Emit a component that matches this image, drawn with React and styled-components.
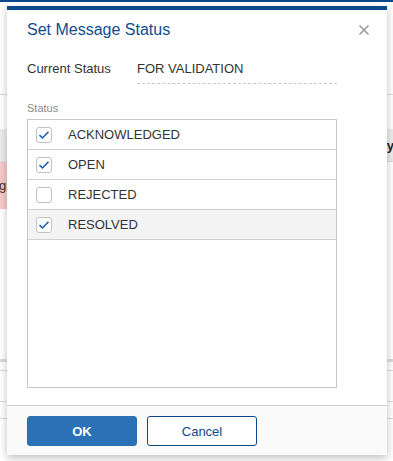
import React, { useState } from 'react';
import styled, { createGlobalStyle } from 'styled-components';

const GlobalStyle = createGlobalStyle`
  html, body {
    margin: 0;
    padding: 0;
    background: #ffffff;
    font-family: "Liberation Sans", Arial, sans-serif;
  }
`;

const Page = styled.div`
  position: relative;
  width: 393px;
  height: 461px;
  overflow: hidden;
  background: #ffffff;
`;

const TopBar = styled.div`
  height: 2px;
  background: #0a4a8a;
`;

const BgRow = styled.div`
  height: ${p => p.h}px;
  margin-top: ${p => p.mt || 0}px;
  background: ${p => p.bg || 'transparent'};
  border-bottom: ${p => (p.line ? `${p.line}px solid #dcdcdc` : 'none')};
  display: flex;
  justify-content: space-between;
  align-items: center;
  font-size: 13px;
  color: #333;
`;

const PinkCell = styled.div`
  width: 200px;
  height: 100%;
  background: #f6caca;
  display: flex;
  align-items: center;
`;

const Dialog = styled.div`
  position: absolute;
  top: 6px;
  left: 7px;
  width: 380px;
  height: 449px;
  box-sizing: border-box;
  background: #ffffff;
  border-top: 4px solid #0a4a8a;
  box-shadow: 0 3px 8px rgba(0, 0, 0, 0.25);
  display: flex;
  flex-direction: column;
`;

const Body = styled.div`
  flex: 1;
  padding: 10px 20px 0;
  display: flex;
  flex-direction: column;
`;

const Header = styled.div`
  display: flex;
  justify-content: space-between;
  align-items: center;
  height: 20px;
`;

const Title = styled.h2`
  margin: 0;
  font-size: 16px;
  font-weight: normal;
  color: #0f4c8c;
  line-height: 20px;
`;

const Close = styled.button`
  border: 0;
  background: none;
  padding: 0;
  width: 12px;
  height: 12px;
  margin-right: -3px;
  display: flex;
  cursor: pointer;
`;

const Field = styled.div`
  display: flex;
  align-items: flex-start;
  margin-top: 21px;
  font-size: 13px;
  line-height: 16px;
  color: #333;
`;

const FieldLabel = styled.div`
  width: 110px;
`;

const FieldValue = styled.div`
  width: 200px;
  padding-bottom: 6px;
  border-bottom: 1px dashed #c8c8c8;
`;

const SmallLabel = styled.div`
  margin-top: 17px;
  font-size: 11px;
  line-height: 14px;
  color: #8a8a8a;
`;

const List = styled.div`
  margin-top: 4px;
  width: 310px;
  height: 269px;
  box-sizing: border-box;
  border: 1px solid #c8c8c8;
`;

const Item = styled.label`
  display: flex;
  align-items: center;
  height: 29px;
  border-bottom: 1px solid #d0d0d0;
  padding-left: 8px;
  background: ${p => (p.$hl ? '#f4f4f4' : '#fff')};
  font-size: 13px;
  color: #333;
  cursor: pointer;
`;

const Box = styled.span`
  width: 16px;
  height: 16px;
  box-sizing: border-box;
  border: 1px solid #c2c2c2;
  border-radius: 3px;
  background: #fff;
  margin-right: 16px;
  display: flex;
  align-items: center;
  justify-content: center;
`;

const Footer = styled.div`
  height: 50px;
  box-sizing: border-box;
  border-top: 1px solid #d0d0d0;
  background: #fafafa;
  padding: 10px 20px 0;
  display: flex;
  gap: 10px;
`;

const Button = styled.button`
  width: 110px;
  height: 30px;
  box-sizing: border-box;
  border-radius: 3px;
  font-family: "Liberation Sans", Arial, sans-serif;
  font-size: 13px;
  font-weight: ${p => (p.$primary ? 'bold' : 'normal')};
  color: ${p => (p.$primary ? '#fff' : '#0a4a8a')};
  background: ${p => (p.$primary ? '#2a72b5' : '#fff')};
  border: 1px solid ${p => (p.$primary ? '#2a72b5' : '#0a4a8a')};
  cursor: pointer;
`;

const Edge = styled.span`
  font-size: 13px;
  color: ${p => p.c || '#333'};
  font-weight: ${p => p.w || 'normal'};
  margin: ${p => p.m};
`;

const Check = () => (
  <svg width="12" height="10" viewBox="0 0 12 10">
    <path d="M1.5 5.2 L4.5 8 L10.5 1.8" fill="none" stroke="#1b5ea6" strokeWidth="1.6" />
  </svg>
);

const statuses = [
  { name: 'ACKNOWLEDGED', on: true },
  { name: 'OPEN', on: true },
  { name: 'REJECTED', on: false },
  { name: 'RESOLVED', on: true, hl: true },
];

export default function App() {
  const [items, setItems] = useState(statuses);

  const toggle = i =>
    setItems(items.map((s, j) => (j === i ? { ...s, on: !s.on } : s)));

  return (
    <Page>
      <GlobalStyle />
      <TopBar />
      <BgRow h={92} line={1} />
      <BgRow h={32} mt={34} bg="#ececec" line={1}>
        <span />
        <Edge m="0 -1px 0 0" c="#222" w="bold">y</Edge>
      </BgRow>
      <BgRow h={47}>
        <PinkCell>
          <Edge m="0 0 0 -1px">g</Edge>
        </PinkCell>
      </BgRow>
      <BgRow h={150} line={3} />
      <BgRow h={8} line={1} />
      <BgRow h={30} line={1} />
      <BgRow h={16} line={1} />

      <Dialog>
        <Body>
          <Header>
            <Title>Set Message Status</Title>
            <Close aria-label="Close">
              <svg width="12" height="12" viewBox="0 0 12 12">
                <path d="M1.5 1.5 L10.5 10.5 M10.5 1.5 L1.5 10.5" stroke="#9a9a9a" strokeWidth="1.6" />
              </svg>
            </Close>
          </Header>
          <Field>
            <FieldLabel>Current Status</FieldLabel>
            <FieldValue>FOR VALIDATION</FieldValue>
          </Field>
          <SmallLabel>Status</SmallLabel>
          <List>
            {items.map((s, i) => (
              <Item key={s.name} $hl={s.hl} onClick={() => toggle(i)}>
                <Box>{s.on && <Check />}</Box>
                {s.name}
              </Item>
            ))}
          </List>
        </Body>
        <Footer>
          <Button $primary>OK</Button>
          <Button>Cancel</Button>
        </Footer>
      </Dialog>
    </Page>
  );
}
